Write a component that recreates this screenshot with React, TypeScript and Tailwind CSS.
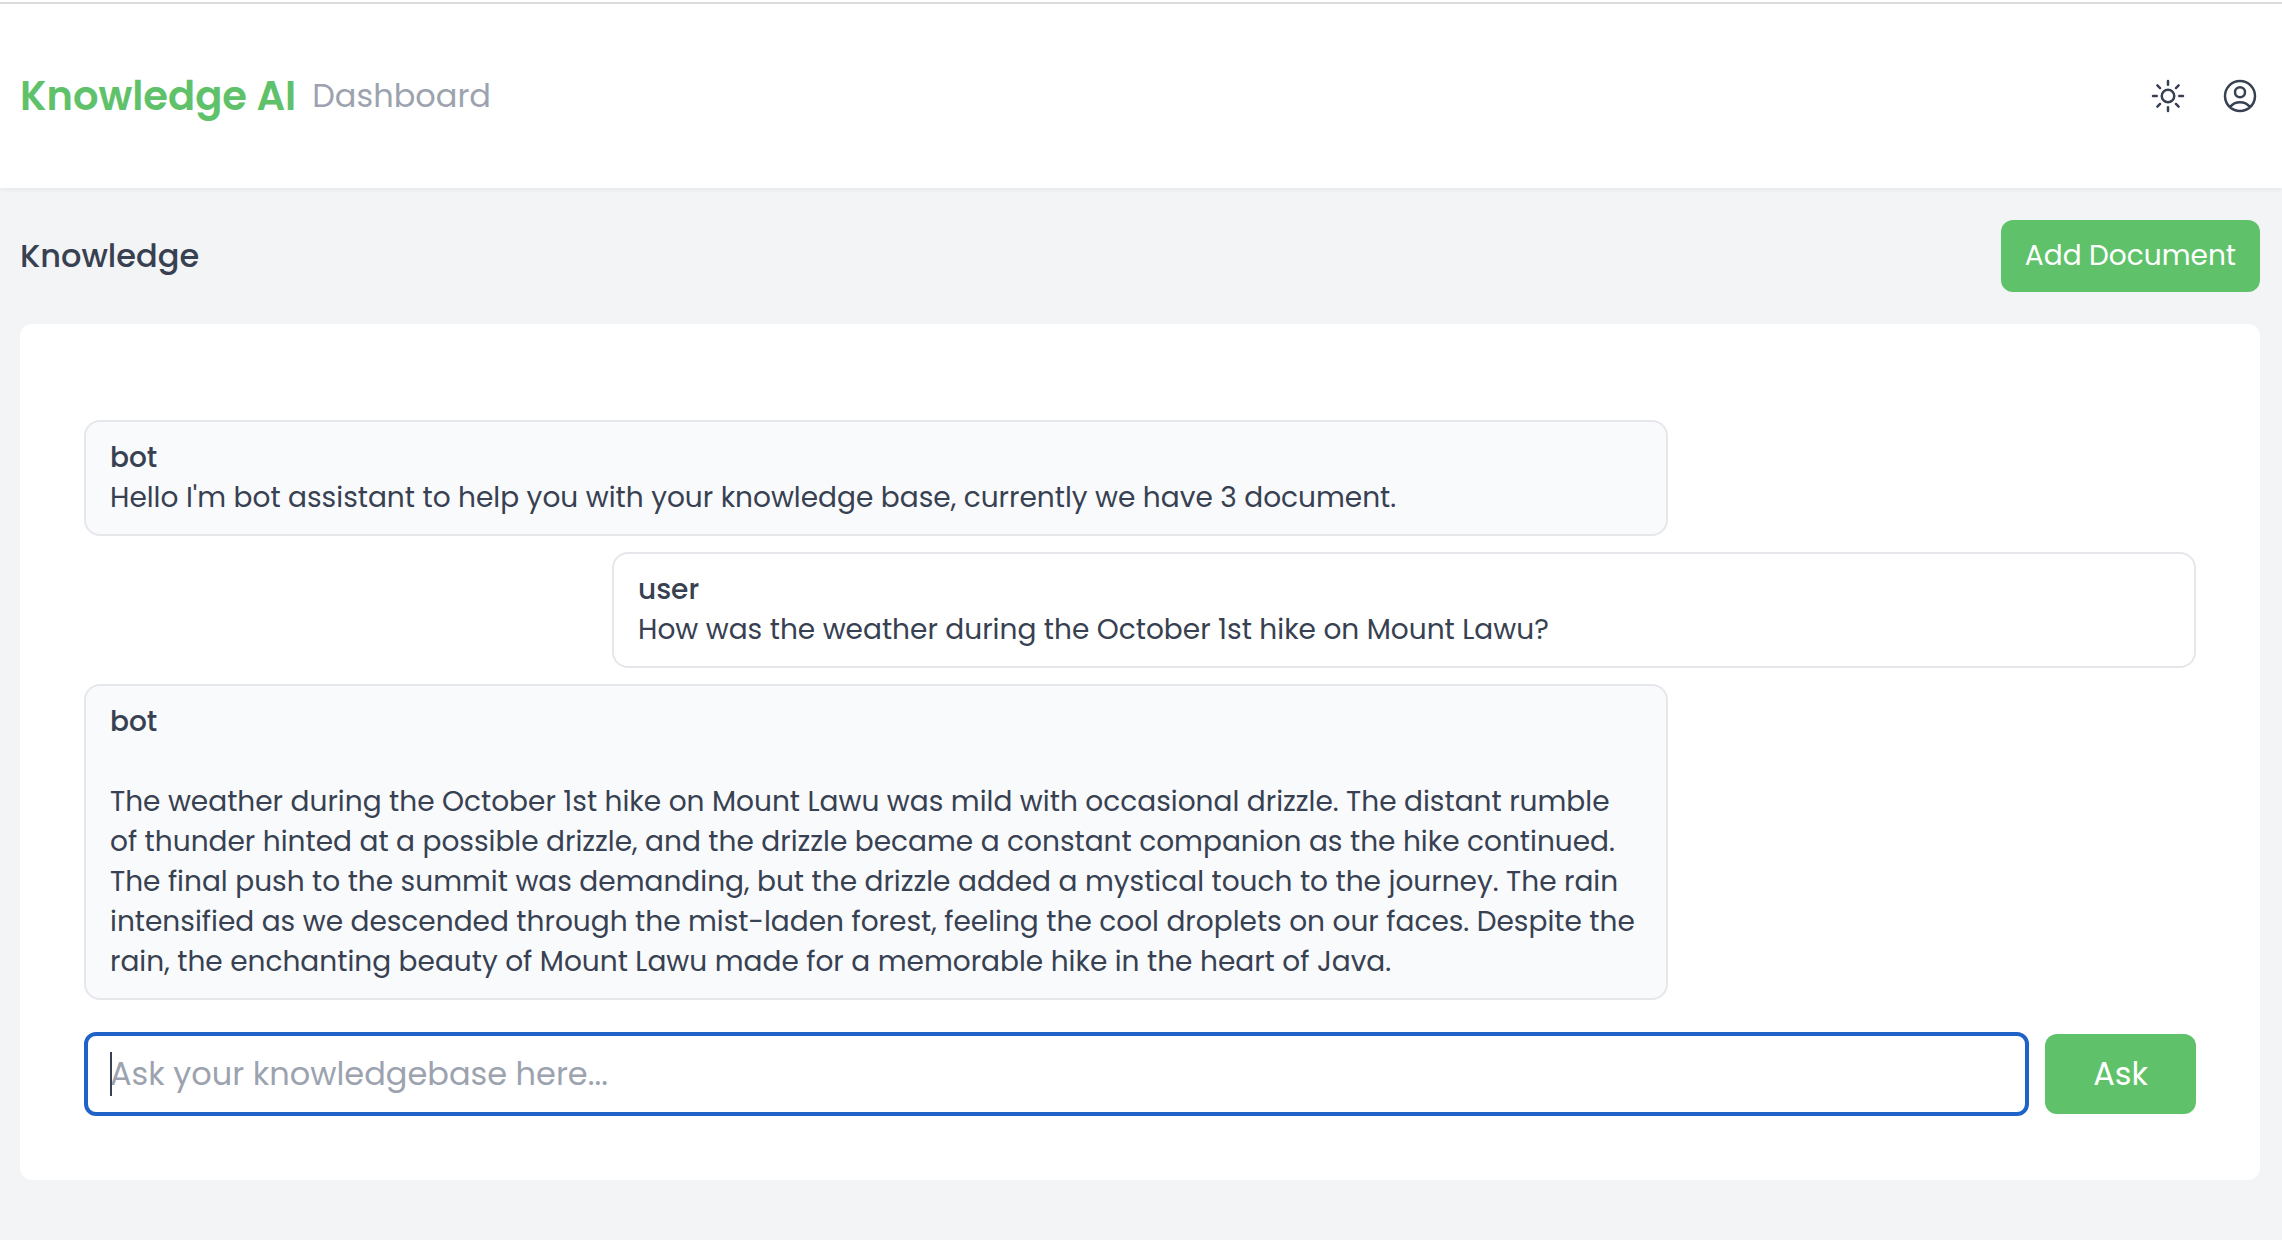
import React from "react";

type Message = { role: "bot" | "user"; text: string };

const messages: Message[] = [
  {
    role: "bot",
    text: "Hello I'm bot assistant to help you with your knowledge base, currently we have 3 document.",
  },
  {
    role: "user",
    text: "How was the weather during the October 1st hike on Mount Lawu?",
  },
  {
    role: "bot",
    text: "\nThe weather during the October 1st hike on Mount Lawu was mild with occasional drizzle. The distant rumble of thunder hinted at a possible drizzle, and the drizzle became a constant companion as the hike continued. The final push to the summit was demanding, but the drizzle added a mystical touch to the journey. The rain intensified as we descended through the mist-laden forest, feeling the cool droplets on our faces. Despite the rain, the enchanting beauty of Mount Lawu made for a memorable hike in the heart of Java.",
  },
];

function Icon({ d }: { d: string }) {
  return (
    <svg
      viewBox="0 0 24 24"
      className="size-10"
      fill="none"
      stroke="currentColor"
      strokeWidth="1.5"
      strokeLinecap="round"
      strokeLinejoin="round"
      aria-hidden="true"
    >
      <path d={d} />
    </svg>
  );
}

const sunPath =
  "M12 3v2.25m6.364.386-1.591 1.591M21 12h-2.25m-.386 6.364-1.591-1.591M12 18.75V21m-4.773-4.227-1.591 1.591M5.25 12H3m4.227-4.773L5.636 5.636M15.75 12a3.75 3.75 0 1 1-7.5 0 3.75 3.75 0 0 1 7.5 0Z";
const userPath =
  "M17.982 18.725A7.488 7.488 0 0 0 12 15.75a7.488 7.488 0 0 0-5.982 2.975m11.963 0a9 9 0 1 0-11.963 0m11.963 0A8.966 8.966 0 0 1 12 21a8.966 8.966 0 0 1-5.982-2.275M15 9.75a3 3 0 1 1-6 0 3 3 0 0 1 6 0Z";

function Bubble({ message }: { message: Message }) {
  const side =
    message.role === "bot" ? "self-start bg-[#f9fafc]" : "self-end bg-white";
  return (
    <li
      className={`w-3/4 rounded-2xl border-2 border-[#e5e7eb] px-6 py-4 text-[28px] leading-10 ${side}`}
    >
      <p className="font-medium">{message.role}</p>
      <p className="whitespace-pre-line">{message.text}</p>
    </li>
  );
}

export default function App() {
  return (
    <div className="min-h-screen bg-[#f3f4f6] font-[Poppins,Inter,sans-serif] text-[#374151]">
      <header className="bg-white pt-0.5 shadow-[0_2px_4px_rgba(0,0,0,0.05)]">
        <div className="flex items-center justify-between border-t-2 border-[#dcdcdc] py-[68px] pr-[22px] pl-5">
          <div className="flex items-center gap-4 leading-12">
            <h1 className="text-[40px] font-semibold text-[#5fc26b]">Knowledge AI</h1>
            <span className="text-[32px] text-[#9ca3af]">Dashboard</span>
          </div>
          <div className="flex items-center gap-8">
            <button type="button" aria-label="Toggle theme">
              <Icon d={sunPath} />
            </button>
            <button type="button" aria-label="Account">
              <Icon d={userPath} />
            </button>
          </div>
        </div>
      </header>

      <main className="py-8 pr-[22px] pl-5">
        <div className="flex items-center justify-between">
          <h2 className="text-[32px] leading-12 font-medium">Knowledge</h2>
          <button
            type="button"
            className="rounded-xl bg-[#5fc26b] px-6 py-4 text-[28px] leading-10 text-white"
          >
            Add Document
          </button>
        </div>

        <section className="mt-8 rounded-xl bg-white px-16 pt-24 pb-16">
          <ul className="flex flex-col gap-4">
            {messages.map((message, index) => (
              <Bubble key={index} message={message} />
            ))}
          </ul>

          <form
            className="mt-8 flex items-center gap-4"
            onSubmit={(event) => event.preventDefault()}
          >
            <div className="relative flex-1">
              <input
                type="text"
                aria-label="Ask your knowledgebase"
                placeholder="Ask your knowledgebase here..."
                className="block h-21 w-full rounded-xl border-4 border-[#1f62c8] bg-white px-[22px] text-[32px] caret-transparent outline-none placeholder:text-[#9ca3af]"
              />
              <span className="pointer-events-none absolute inset-y-5 left-[26px] w-0.5 bg-[#374151]" />
            </div>
            <button
              type="submit"
              className="rounded-xl bg-[#5fc26b] px-12 py-4 text-[32px] leading-12 text-white"
            >
              Ask
            </button>
          </form>
        </section>
      </main>
    </div>
  );
}
